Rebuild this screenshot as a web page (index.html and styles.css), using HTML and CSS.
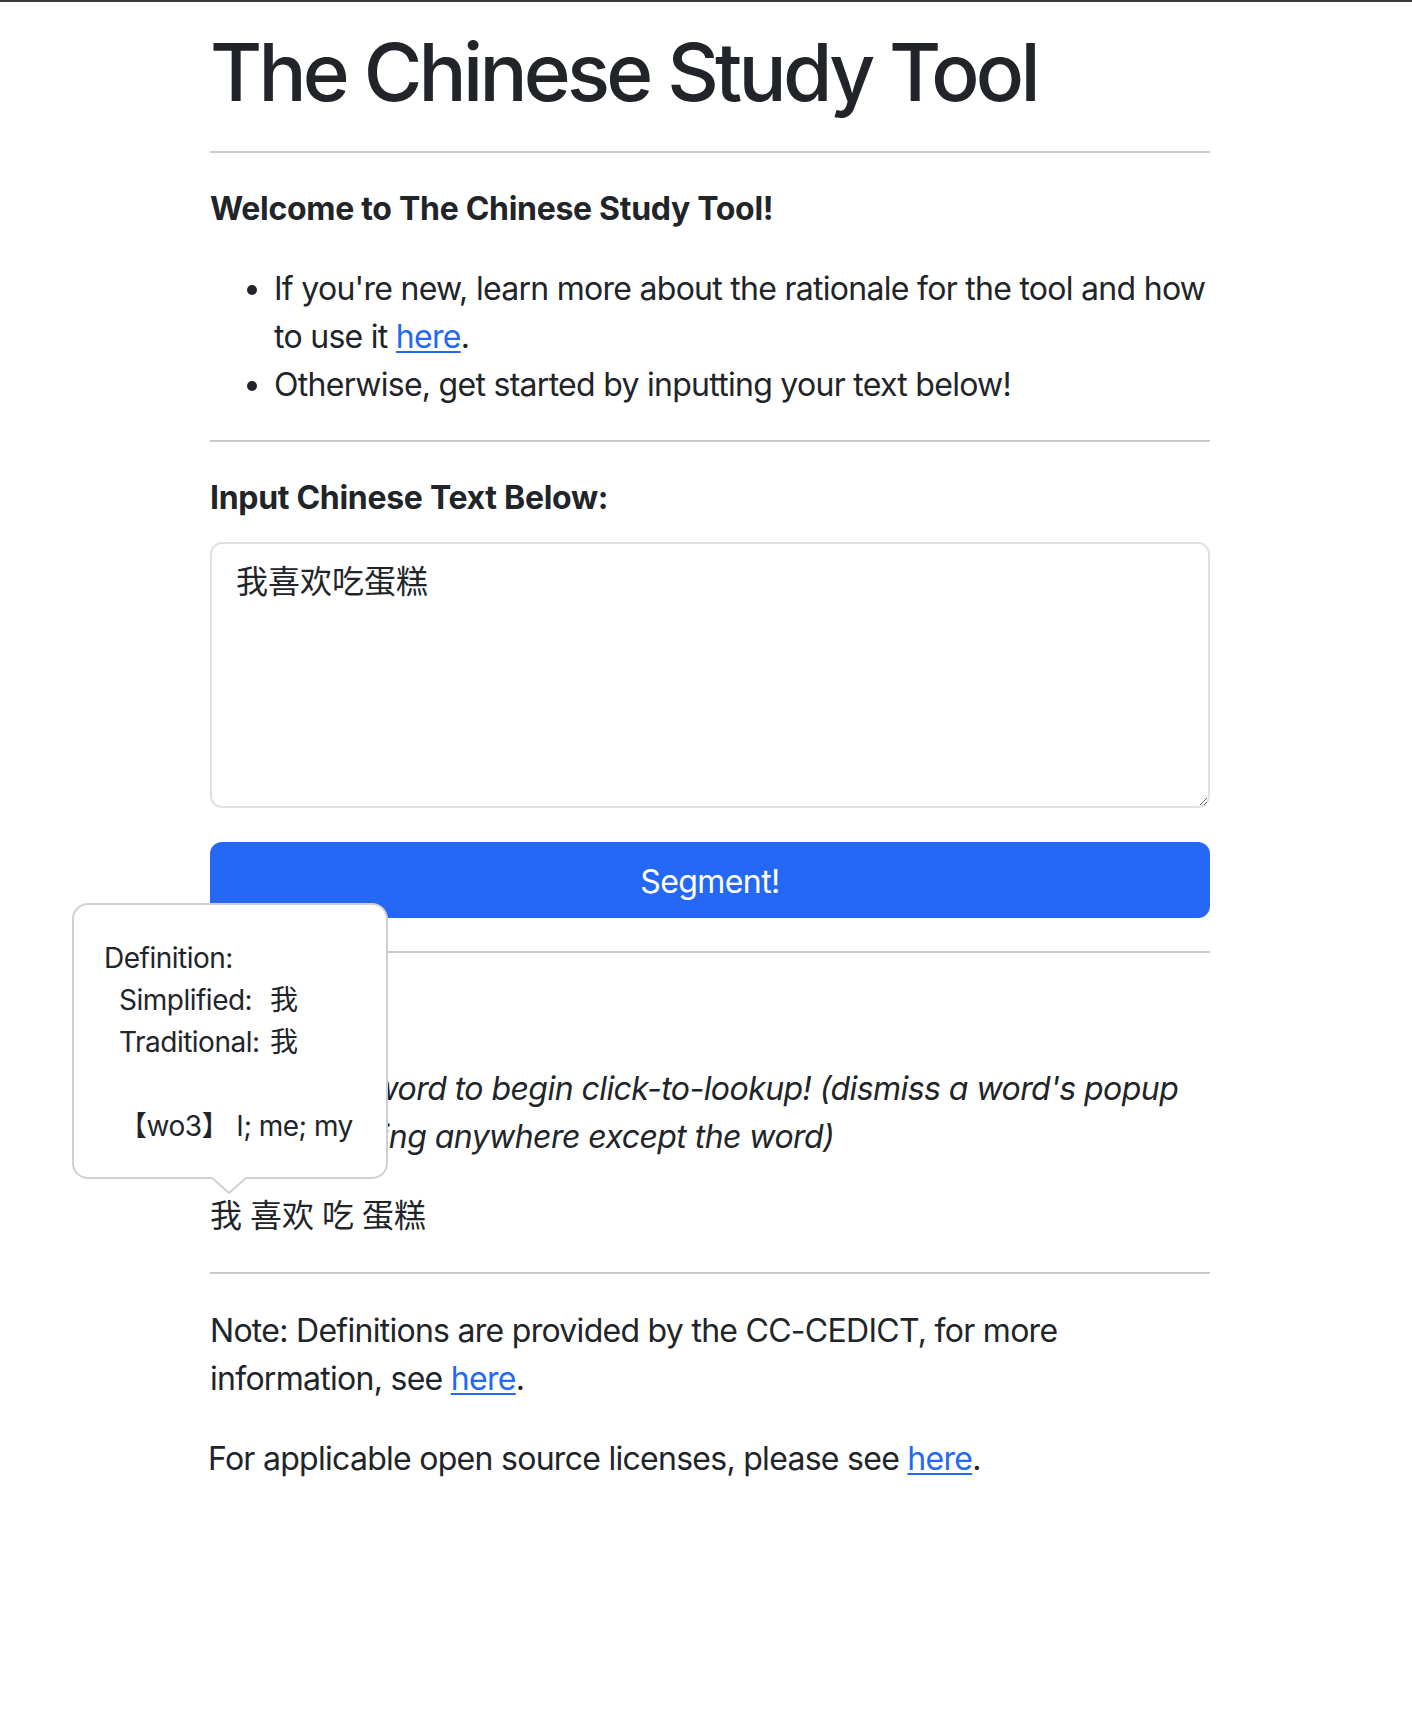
FILE: index.html
```html
<!DOCTYPE html>
<html lang="en">
<head>
<meta charset="utf-8">
<title>The Chinese Study Tool</title>
<link rel="stylesheet" href="styles.css">
</head>
<body>
<div class="topbar"></div>
<main class="container">
  <h1 class="title">The Chinese Study Tool</h1>
  <hr class="rule">
  <h6 class="section-heading welcome">Welcome to The Chinese Study Tool!</h6>
  <ul class="intro-list">
    <li>If you're new, learn more about the rationale for the tool and how to use it <a href="#" class="link">here</a>.</li>
    <li>Otherwise, get started by inputting your text below!</li>
  </ul>
  <hr class="rule">
  <form class="input-form">
    <label class="section-heading input-label" for="chinese-text">Input Chinese Text Below:</label>
    <textarea id="chinese-text" class="text-input">我喜欢吃蛋糕</textarea>
    <button type="button" class="segment-btn">Segment!</button>
  </form>
  <hr class="rule">
  <section class="output">
    <h6 class="section-heading output-heading">Output:</h6>
    <p class="hint">Click on a word to begin click-to-lookup! (dismiss a word's popup by just clicking anywhere except the word)</p>
    <div class="segmented"><span class="word active">我<span class="popup"><span class="popup-line">Definition:</span><span class="popup-grid"><span>Simplified:</span><span>我</span><span>Traditional:</span><span>我</span></span><span class="popup-line blank"></span><span class="popup-line indent">【wo3】 I; me; my</span><svg class="popup-arrow" width="34" height="17" viewBox="0 0 34 17"><path d="M0 0H34L17 16Z" fill="#fff"/><path d="M0 1L17 16L34 1" fill="none" stroke="#d0d0d0" stroke-width="2"/></svg></span></span> <span class="word">喜欢</span> <span class="word">吃</span> <span class="word">蛋糕</span></div>
  </section>
  <hr class="rule rule-footer">
  <p class="note">Note: Definitions are provided by the CC-CEDICT, for more information, see <a href="#" class="link">here</a>.</p>
  <p class="license">For applicable open source licenses, please see <a href="#" class="link">here</a>.</p>
</main>
</body>
</html>
```
FILE: styles.css
```css
html, body {
  margin: 0;
  padding: 0;
  background: #ffffff;
}

body {
  font-family: Inter, "Noto Sans CJK SC", sans-serif;
  font-size: 32px;
  line-height: 48px;
  color: #212529;
  letter-spacing: -0.72px;
}

.topbar {
  height: 2px;
  background: #3b3b3b;
}

.container {
  width: 1000px;
  margin-left: 210px;
  padding-top: 22px;
}

.title {
  margin: 0;
  font-size: 80px;
  line-height: 96px;
  font-weight: 500;
  letter-spacing: -3.75px;
}

.rule {
  margin: 31px 0 32px;
  height: 0;
  border: 0;
  border-top: 2px solid #c8c9ca;
}

.section-heading {
  display: block;
  margin: 0;
  font-size: 32px;
  line-height: 48px;
  font-weight: 700;
  letter-spacing: -0.3px;
}

.welcome {
  margin-bottom: 32px;
}

.intro-list {
  margin: 0;
  padding-left: 64px;
}

.link {
  color: #2468f5;
  text-decoration: underline;
  text-underline-offset: 3px;
  text-decoration-thickness: 2px;
}

.input-form {
  margin: 0;
  padding-bottom: 2px;
}

.input-label {
  margin-bottom: 20px;
}

.text-input {
  display: block;
  width: 100%;
  height: 266px;
  box-sizing: border-box;
  margin: 0;
  padding: 14px 24px 10px;
  border: 2px solid #dee2e6;
  border-radius: 12px;
  font: inherit;
  letter-spacing: 0;
  color: #212529;
  background: #fff;
  outline: none;
}

.segment-btn {
  display: block;
  width: 100%;
  height: 76px;
  box-sizing: border-box;
  margin: 34px 0 0;
  padding: 14px 24px 10px;
  border: 2px solid #2468f5;
  border-radius: 12px;
  background: #2468f5;
  color: #ffffff;
  font: inherit;
  letter-spacing: -0.6px;
  cursor: pointer;
}

.output-heading {
  margin-bottom: 32px;
}

.hint {
  margin: 0 0 31px;
  font-style: italic;
  letter-spacing: -0.55px;
  text-indent: 9px;
}

.segmented {
  letter-spacing: 0;
  word-spacing: -1px;
}

.word {
  display: inline-block;
  position: relative;
  cursor: pointer;
  text-indent: 0;
}

.popup {
  position: absolute;
  left: -138px;
  bottom: calc(100% + 13px);
  z-index: 10;
  display: block;
  width: 316px;
  box-sizing: border-box;
  padding: 32px 30px 30px;
  border: 2px solid #d0d0d0;
  border-radius: 16px;
  background: #ffffff;
  font-size: 28px;
  line-height: 42px;
  letter-spacing: -0.5px;
  word-spacing: 0;
  white-space: nowrap;
  text-align: left;
  cursor: default;
}

.popup-line {
  display: block;
  height: 42px;
}

.popup-line.indent {
  padding-left: 15px;
}

.popup-grid {
  display: grid;
  grid-template-columns: 151px auto;
  padding-left: 15px;
}

.popup-arrow {
  position: absolute;
  top: 100%;
  left: 138px;
  display: block;
}

.rule-footer {
  margin-top: 32px;
  margin-bottom: 33px;
}

.note {
  margin: 0 0 32px;
}

.license {
  margin: 0;
  margin-left: -2px;
}
```
